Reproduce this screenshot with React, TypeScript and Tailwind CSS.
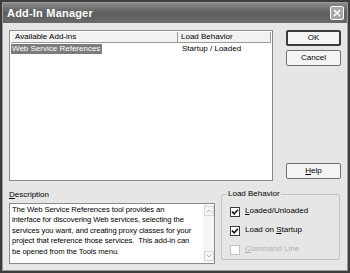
import React from "react";

const font = { fontFamily: '"Liberation Sans", Arial, sans-serif' };

function Check({ checked, disabled, label, u, rest }: { checked: boolean; disabled?: boolean; label: string; u: string; rest: string }) {
  return (
    <div className={`flex items-center gap-[5px] h-[19px] ${disabled ? "text-[#b0b0b0]" : "text-black"}`}>
      <div className={`w-[10px] h-[10px] border flex items-center justify-center bg-white ${disabled ? "border-[#c4c4c4]" : "border-[#3a3a3a]"}`}>
        {checked && (
          <svg width="8" height="8" viewBox="0 0 8 8">
            <path d="M1 3.6 L3.2 5.8 L7 1.8" stroke="#111" strokeWidth="1.6" fill="none" />
          </svg>
        )}
      </div>
      <span>
        {label}
        <span className="underline">{u}</span>
        {rest}
      </span>
    </div>
  );
}

function Btn({ children, def }: { children: React.ReactNode; def?: boolean }) {
  return (
    <div
      className={`w-[55px] h-[16px] flex items-center justify-center bg-[#f4f4f4] rounded-[2px] text-black ${
        def ? "border-2 border-[#3c3c3c]" : "border border-[#707070]"
      }`}
    >
      {children}
    </div>
  );
}

export default function App() {
  return (
    <div className="w-[350px] h-[273px] bg-[#3c3c3c] p-[2px] text-[8px] leading-[10.5px]" style={font}>
      <div className="w-full h-full flex flex-col bg-[#e6e6e6] border border-[#9a9a9a]">
        {/* Title bar */}
        <div className="h-[20px] flex items-center justify-between pl-[4px] pr-[3px] bg-gradient-to-b from-[#8a8a8a] via-[#5e5e5e] to-[#6a6a6a]">
          <span className="text-white font-bold text-[11px] tracking-[0.2px]">Add-In Manager</span>
          <div className="w-[14px] h-[14px] rounded-[2px] border border-white bg-[#a8a8a8] flex items-center justify-center">
            <svg width="8" height="8" viewBox="0 0 8 8">
              <path d="M1 1 L7 7 M7 1 L1 7" stroke="white" strokeWidth="1.6" />
            </svg>
          </div>
        </div>

        {/* Body */}
        <div className="flex-1 flex flex-col pl-[6px] pr-[5px] pt-[7px]">
          <div className="flex gap-[13px]">
            {/* List view */}
            <div className="w-[264px] h-[151px] bg-white border border-[#8a8a8a] p-px">
              <div className="flex h-[11px] bg-[#f2f2f2] border-b border-[#9a9a9a]">
                <div className="w-[167px] pl-[3px] border-r border-[#9a9a9a] border-l border-l-white">Available Add-ins</div>
                <div className="flex-1 pl-[3px] border-r border-[#9a9a9a]">Load Behavior</div>
              </div>
              <div className="flex h-[12px] items-center">
                <div className="w-[168px]">
                  <span className="inline-block bg-[#7c7c7c] text-white pr-[2px] pl-[1px]">Web Service References</span>
                </div>
                <div className="pl-[3px]">Startup / Loaded</div>
              </div>
            </div>

            {/* Buttons */}
            <div className="flex flex-col">
              <Btn def>OK</Btn>
              <div className="h-[4px]" />
              <Btn>Cancel</Btn>
              <div className="h-[97px]" />
              <Btn>
                <span className="underline">H</span>elp
              </Btn>
            </div>
          </div>

          <div className="flex gap-[6px] mt-[9px]">
            {/* Description */}
            <div className="flex flex-col w-[206px]">
              <div className="h-[10px] leading-[10px]">
                <span className="underline">D</span>escription
              </div>
              <div className="mt-[3px] h-[61px] flex bg-white border border-[#8a8a8a]">
                <div className="flex-1 pl-[2px] pt-[1px] text-black text-[7.7px] leading-[10.4px] tracking-[-0.1px] whitespace-nowrap">
                  The Web Service References tool provides an
                  <br />
                  interface for discovering Web services, selecting the
                  <br />
                  services you want, and creating proxy classes for your
                  <br />
                  project that reference those services.&nbsp; This add-in can
                  <br />
                  be opened from the Tools menu.
                </div>
                <div className="w-[11px] flex flex-col justify-between items-center py-[2px] bg-[#f6f6f6]">
                  <div className="w-[10px] h-[10px] border border-[#d6d6d6] flex items-center justify-center">
                    <svg width="6" height="4" viewBox="0 0 6 4">
                      <path d="M0.5 3.5 L3 1 L5.5 3.5" stroke="#b8b8b8" strokeWidth="1" fill="none" />
                    </svg>
                  </div>
                  <div className="w-[10px] h-[10px] border border-[#d6d6d6] flex items-center justify-center">
                    <svg width="6" height="4" viewBox="0 0 6 4">
                      <path d="M0.5 0.5 L3 3 L5.5 0.5" stroke="#b8b8b8" strokeWidth="1" fill="none" />
                    </svg>
                  </div>
                </div>
              </div>
            </div>

            {/* Load Behavior group */}
            <div className="w-[119px] mt-[4px] h-[66px] border border-[#c4c4c4] rounded-[2px] relative pl-[8px] pt-[7px]">
              <span className="absolute -top-[6px] left-[5px] px-[1px] bg-[#e6e6e6]">Load Behavior</span>
              <Check checked label="" u="L" rest="oaded/Unloaded" />
              <Check checked label="Load on " u="S" rest="tartup" />
              <Check checked={false} disabled label="" u="C" rest="ommand Line" />
            </div>
          </div>
        </div>
      </div>
    </div>
  );
}
